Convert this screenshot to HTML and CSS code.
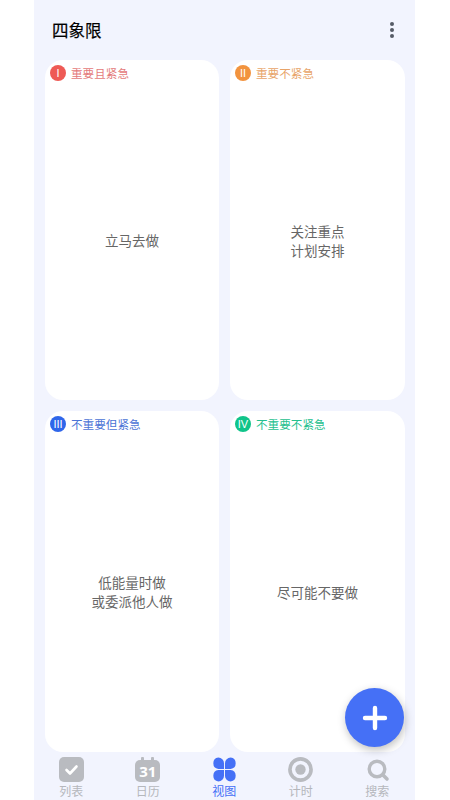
FILE: index.html
```html
<!DOCTYPE html>
<html>
<head>
    <meta charset="UTF-8">
    <meta name="viewport" content="width=device-width, initial-scale=1.0">
    <title>四象限</title>
    <link rel="stylesheet" href="styles.css">
</head>
<body>
    <div class="phone">
        <div class="header">
            <h1>四象限</h1>
            <div class="more"><span></span><span></span><span></span></div>
        </div>

        <div class="grid">
            <div class="card">
                <div class="card-head red"><span class="num">I</span><span class="label">重要且紧急</span></div>
                <div class="card-body">立马去做</div>
            </div>
            <div class="card">
                <div class="card-head orange"><span class="num">II</span><span class="label">重要不紧急</span></div>
                <div class="card-body">关注重点<br>计划安排</div>
            </div>
            <div class="card">
                <div class="card-head blue"><span class="num">III</span><span class="label">不重要但紧急</span></div>
                <div class="card-body">低能量时做<br>或委派他人做</div>
            </div>
            <div class="card">
                <div class="card-head green"><span class="num">IV</span><span class="label">不重要不紧急</span></div>
                <div class="card-body">尽可能不要做</div>
            </div>
        </div>

        <div class="fab">
            <svg width="26" height="26" viewBox="0 0 26 26"><path d="M13 3v20M3 13h20" stroke="#fff" stroke-width="4.4" stroke-linecap="round" fill="none"/></svg>
        </div>

        <div class="tabbar">
            <div class="tab">
                <svg width="25" height="25" viewBox="0 0 25 25">
                    <rect width="25" height="25" rx="5" fill="#b9bbc0"/>
                    <path d="M7.5 13l3.5 3.5 6.5-7" stroke="#fff" stroke-width="2.6" stroke-linecap="round" stroke-linejoin="round" fill="none"/>
                </svg>
                <span class="tab-label">列表</span>
            </div>
            <div class="tab">
                <div class="cal"><span>31</span></div>
                <span class="tab-label">日历</span>
            </div>
            <div class="tab active">
                <svg width="25" height="25" viewBox="0 0 26 26" fill="#4570f6">
                    <path d="M6.6.6a5.9 5.9 0 0 1 5.9 5.9v6H6.6a6 6 0 0 1 0-11.9z"/>
                    <path d="M19.4.6a5.9 5.9 0 0 0-5.9 5.9v6h5.9a6 6 0 0 0 0-11.9z"/>
                    <path d="M6.6 25.4a5.9 5.9 0 0 0 5.9-5.9v-6H6.6a6 6 0 0 0 0 11.9z"/>
                    <path d="M19.4 25.4a5.9 5.9 0 0 1-5.9-5.9v-6h5.9a6 6 0 0 1 0 11.9z"/>
                </svg>
                <span class="tab-label">视图</span>
            </div>
            <div class="tab">
                <svg width="25" height="25" viewBox="0 0 26 26">
                    <circle cx="13" cy="13" r="11" fill="none" stroke="#b9bbc0" stroke-width="3.8"/>
                    <circle cx="13" cy="13" r="5.4" fill="#b9bbc0"/>
                </svg>
                <span class="tab-label">计时</span>
            </div>
            <div class="tab">
                <svg width="25" height="25" viewBox="0 0 25 25" fill="none" stroke="#b9bbc0">
                    <circle cx="12" cy="12" r="7.8" stroke-width="3.4"/>
                    <path d="M18 18l4 4" stroke-width="3.6" stroke-linecap="round"/>
                </svg>
                <span class="tab-label">搜索</span>
            </div>
        </div>
    </div>
</body>
</html>
```

FILE: styles.css
```css
* {
    margin: 0;
    padding: 0;
    box-sizing: border-box;
}

body {
    font-family: "Noto Sans CJK SC", "Noto Sans", sans-serif;
    background: #fff;
    width: 450px;
    height: 800px;
    overflow: hidden;
}

.phone {
    position: relative;
    width: 381px;
    height: 800px;
    margin-left: 34px;
    background: #f2f4fe;
    display: flex;
    flex-direction: column;
}

.header {
    height: 60px;
    padding: 0 21px 0 18px;
    display: flex;
    align-items: center;
    justify-content: space-between;
}

h1 {
    font-size: 16.5px;
    font-weight: 400;
    -webkit-text-stroke: 0.2px #000;
    color: #000;
}

.more {
    display: flex;
    flex-direction: column;
    gap: 2px;
}

.more span {
    width: 4px;
    height: 4px;
    border-radius: 50%;
    background: #555a66;
}

.grid {
    display: grid;
    grid-template-columns: 174px 175px;
    grid-template-rows: 340px 341px;
    gap: 11px;
    padding-left: 11px;
}

.card {
    background: #fff;
    border-radius: 18px;
    display: flex;
    flex-direction: column;
}

.card-head {
    display: flex;
    align-items: center;
    gap: 5px;
    padding: 5px 0 0 5px;
    font-size: 11.6px;
    line-height: 16px;
}

.num {
    width: 16px;
    height: 16px;
    border-radius: 50%;
    color: #fff;
    font-family: "Liberation Sans", sans-serif;
    font-size: 11px;
    text-align: center;
}

.red .label { color: #e47a7a; }
.red .num { background: #ee5a55; }
.orange .label { color: #e8a468; }
.orange .num { background: #f2933e; }
.blue .label { color: #4b73d6; }
.blue .num { background: #2f66ea; }
.green .label { color: #24c08e; }
.green .num { background: #10c48a; }

.card-body {
    flex: 1;
    display: flex;
    align-items: center;
    justify-content: center;
    text-align: center;
    font-size: 13.5px;
    line-height: 19px;
    color: #666;
}

.fab {
    position: absolute;
    left: 311px;
    top: 688px;
    width: 59px;
    height: 59px;
    border-radius: 50%;
    background: #4570f6;
    box-shadow: 1px 3px 8px rgba(0,0,0,0.25);
    display: flex;
    align-items: center;
    justify-content: center;
}

.tabbar {
    display: grid;
    grid-template-columns: repeat(5, 76.5px);
    margin-left: -1px;
    padding-top: 5px;
}

.tab {
    display: flex;
    flex-direction: column;
    align-items: center;
    color: #b5b7bc;
}

.tab-label {
    margin-top: 1px;
    font-size: 12px;
    line-height: 16px;
}

.tab.active {
    color: #4570f6;
}

.cal {
    position: relative;
    width: 25px;
    height: 25px;
    display: flex;
    align-items: flex-end;
    justify-content: center;
}

.cal span {
    width: 25px;
    height: 22px;
    border-radius: 5px;
    background: #b9bbc0;
    color: #fff;
    font-family: "Noto Sans", sans-serif;
    font-size: 15px;
    font-weight: 700;
    line-height: 22px;
    text-align: center;
}

.cal::before,
.cal::after {
    content: "";
    position: absolute;
    top: 0;
    width: 3px;
    height: 5px;
    border-radius: 1px;
    background: #b9bbc0;
}

.cal::before { left: 6px; }
.cal::after { right: 6px; }
```
